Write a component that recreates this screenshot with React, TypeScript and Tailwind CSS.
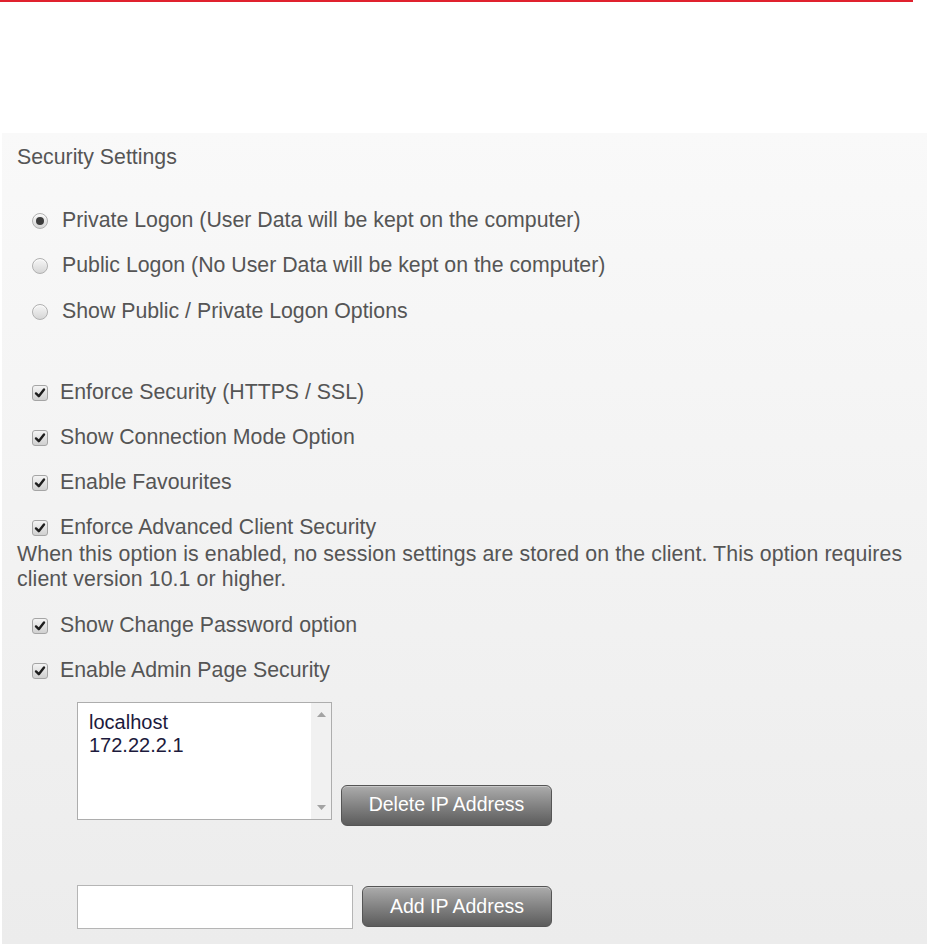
import React from 'react'

const font = { fontFamily: '"Liberation Sans", Arial, sans-serif' }

function Radio({ checked, label }: { checked?: boolean; label: string }) {
  return (
    <div className="flex items-center h-[45.5px]">
      <span className="w-[16px] h-[16px] rounded-full border border-[#b0b0b0] bg-gradient-to-b from-[#f6f6f6] to-[#d6d6d6] flex items-center justify-center ml-[15px] mr-[14px] shadow-[inset_0_1px_1px_rgba(255,255,255,0.8)]">
        {checked && <span className="w-[8px] h-[8px] rounded-full bg-[#3c3c3c]" />}
      </span>
      <span>{label}</span>
    </div>
  )
}

function Check({ label }: { label: string }) {
  return (
    <div className="flex items-center h-[45px]">
      <span className="w-[16px] h-[16px] rounded-[3px] border border-[#a5a5a5] bg-gradient-to-b from-[#f4f4f4] to-[#d0d0d0] flex items-center justify-center ml-[15px] mr-[12px]">
        <svg width="12" height="12" viewBox="0 0 12 12">
          <path d="M2 6.4 L4.8 9.2 L10 2.4" fill="none" stroke="#1e1e1e" strokeWidth="2.4" strokeLinecap="round" strokeLinejoin="round" />
        </svg>
      </span>
      <span>{label}</span>
    </div>
  )
}

function GrayButton({ children, w, h, className = '' }: { children: React.ReactNode; w: string; h: string; className?: string }) {
  return (
    <button
      className={`${w} ${h} ${className} rounded-[6px] border border-[#555] bg-gradient-to-b from-[#acacac] to-[#5c5c5c] text-white text-[19.5px] shadow-[inset_0_1px_0_rgba(255,255,255,0.35)]`}
      style={font}
    >
      {children}
    </button>
  )
}

export default function App() {
  return (
    <div className="w-[927px] h-[944px] bg-white overflow-hidden" style={font}>
      <div className="h-[2px] w-[913px] bg-[#e0212e]" />
      <div className="h-[131px]" />
      <div className="ml-[2px] h-[811px] bg-gradient-to-b from-[#f9f9f9] to-[#ececec] text-[#555] text-[21.3px] pl-[15px]">
        <div className="pt-[12px] h-[65px] leading-[24px]">Security Settings</div>

        {/* logon type */}
        <div>
          <Radio checked label="Private Logon (User Data will be kept on the computer)" />
          <Radio label="Public Logon (No User Data will be kept on the computer)" />
          <Radio label="Show Public / Private Logon Options" />
        </div>

        <div className="pt-[36px]">
          <Check label="Enforce Security (HTTPS / SSL)" />
          <Check label="Show Connection Mode Option" />
          <Check label="Enable Favourites" />
          <Check label="Enforce Advanced Client Security" />
          <p className="-mt-[9px] leading-[25px] pr-[12px] mb-[12px] tracking-[0.1px]">
            When this option is enabled, no session settings are stored on the client. This option requires client version 10.1 or higher.
          </p>
          <Check label="Show Change Password option" />
          <Check label="Enable Admin Page Security" />
        </div>

        {/* ip list */}
        <div className="pl-[60px] pt-[8px]">
          <div className="flex items-start gap-[9px]">
            <div className="w-[255px] h-[118px] border border-[#adadad] bg-white flex">
              <div className="flex-1 pl-[11px] pt-[8px] text-[#1c1a3c] text-[20px] leading-[23px]">
                <div>localhost</div>
                <div>172.22.2.1</div>
              </div>
              <div className="w-[20px] bg-[#f1f1f1] flex flex-col justify-between items-center py-[9px]">
                <svg width="9" height="5" viewBox="0 0 9 5"><path d="M0 5 L4.5 0 L9 5Z" fill="#a3a3a3" /></svg>
                <svg width="9" height="5" viewBox="0 0 9 5"><path d="M0 0 L4.5 5 L9 0Z" fill="#a3a3a3" /></svg>
              </div>
            </div>
            <GrayButton w="w-[211px]" h="h-[41px]" className="mt-[83px]">Delete IP Address</GrayButton>
          </div>

          <div className="flex items-center gap-[9px] mt-[59px]">
            <input className="w-[276px] h-[44px] border border-[#b5b5b5] bg-white outline-none" />
            <GrayButton w="w-[190px]" h="h-[41px]">Add IP Address</GrayButton>
          </div>
        </div>
      </div>
    </div>
  )
}
